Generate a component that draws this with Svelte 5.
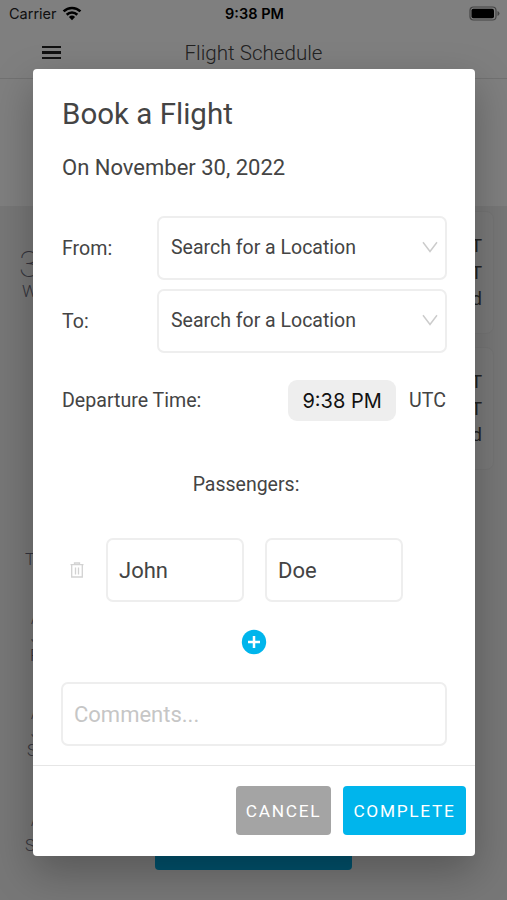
<script>
  let passengers = $state([{ first: "John", last: "Doe" }]);
  let comments = $state("");

  const locations = ["From:", "To:"];

  // Flight cards and roster lines on the schedule page
  const cards = [
    ["T", "T", "d"],
    ["T", "T", "d"],
  ];
  const roster = [
    { id: "head", lines: ["T"] },
    { id: "first", lines: ["A", "J", "P"] },
    { id: "second", lines: ["A", "J", "S"] },
    { id: "third", lines: ["A", "S"] },
  ];

  function addPassenger() {
    passengers.push({ first: "", last: "" });
  }

  function removePassenger(i) {
    passengers.splice(i, 1);
  }
</script>

<div class="screen">
  <div class="status-bar">
    <div class="carrier">
      <span>Carrier</span>
      <svg width="20" height="15" viewBox="0 0 20 15">
        <path d="M1.6 5.4a12 12 0 0 1 16.8 0" />
        <path d="M4.7 8.7a7.6 7.6 0 0 1 10.6 0" />
        <path class="dot" d="M6.9 11a4.5 4.5 0 0 1 6.2 0L10 14.2z" />
      </svg>
    </div>
    <span class="clock">9:38 PM</span>
    <svg class="battery" width="31" height="15" viewBox="0 0 31 15">
      <rect class="shell" x="1" y="1" width="26" height="13" rx="3.5" />
      <rect x="2.500" y="2.700" width="22.500" height="9.600" rx="1.8" />
      <path class="cap" d="M28.5 5v5q2-.8 2-2.500t-2-2.500z" />
    </svg>
  </div>

  <header>
    <div class="burger"><i></i><i></i><i></i></div>
    <h1>Flight Schedule</h1>
  </header>

  <main>
    <div class="day">
      <span class="num">3</span>
      <span class="name">W</span>
      <div class="roster">
        {#each roster as group (group.id)}
          <div class="group {group.id}">
            {#each group.lines as line}
              <span>{line}</span>
            {/each}
          </div>
        {/each}
      </div>
    </div>
    <div class="cards">
      {#each cards as card}
        <div class="card">
          {#each card as line}
            <span>{line}</span>
          {/each}
        </div>
      {/each}
    </div>
  </main>
  <div class="page-btn"></div>

  <div class="overlay">
    <div class="modal" role="dialog" aria-label="Book a Flight">
      <div class="body">
        <h2>Book a Flight</h2>
        <p class="date">On November 30, 2022</p>

        <div class="locations">
          {#each locations as label}
            <div class="row">
              <span class="label">{label}</span>
              <button class="box select">
                <span>Search for a Location</span>
                <svg width="16" height="12" viewBox="0 0 16 12">
                  <path d="M1 1.200 8 10.400 15 1.200" />
                </svg>
              </button>
            </div>
          {/each}
        </div>

        <div class="departure">
          <span class="label">Departure Time:</span>
          <button class="time">9:38 PM</button>
          <span class="utc">UTC</span>
        </div>

        <h3>Passengers:</h3>
        {#each passengers as passenger, i}
          <div class="passenger">
            <button class="trash" aria-label="Remove" onclick={() => removePassenger(i)}>
              <svg width="14" height="16" viewBox="0 0 14 16">
                <path d="M.5 2.700h13M4.500 2.500V1h5v1.500M1.700 3v12h10.600V3M5.500 5.500v7M8.500 5.500v7" />
              </svg>
            </button>
            <input class="box" aria-label="First name" bind:value={passenger.first} />
            <input class="box" aria-label="Last name" bind:value={passenger.last} />
          </div>
        {/each}

        <button class="add" aria-label="Add passenger" onclick={addPassenger}>
          <svg width="26" height="26" viewBox="0 0 26 26">
            <circle cx="13" cy="13" r="12.200" />
            <path d="M13 7v12M7 13h12" />
          </svg>
        </button>

        <input class="box comments" placeholder="Comments..." bind:value={comments} />
      </div>
      <footer>
        <button class="btn cancel">CANCEL</button>
        <button class="btn complete">COMPLETE</button>
      </footer>
    </div>
  </div>
</div>

<style>
  :global(body) {
    margin: 0;
  }

  .screen {
    position: relative;
    width: 507px;
    height: 900px;
    overflow: hidden;
    display: flex;
    flex-direction: column;
    background: #eee;
    color: #444;
    font-family: Roboto, "Liberation Sans", sans-serif;
  }

  .screen * {
    box-sizing: border-box;
  }

  button {
    padding: 0;
    border: 0;
    background: none;
    color: inherit;
    font: inherit;
  }

  /* Schedule page */
  .status-bar {
    display: grid;
    grid-template-columns: 1fr auto 1fr;
    align-items: center;
    height: 27px;
    padding: 0 7px 0 9px;
    background: #fff;
    color: #000;
    font: 14.5px Inter, sans-serif;
  }

  .carrier {
    display: flex;
    align-items: center;
    gap: 5px;
  }

  .carrier span {
    color: #222;
  }

  .carrier path {
    fill: none;
    stroke: #000;
    stroke-width: 2.6;
  }

  .carrier .dot {
    fill: #000;
    stroke: none;
  }

  .clock {
    font-weight: 600;
  }

  .battery {
    justify-self: end;
  }

  .battery .shell {
    fill: none;
    stroke: #888;
    stroke-width: 1.2;
  }

  .battery .cap {
    fill: #888;
  }

  header {
    display: grid;
    grid-template-columns: 102px 1fr 102px;
    align-items: center;
    height: 52px;
    border-bottom: 1px solid #e2e2e2;
    background: #fff;
  }

  .burger {
    display: flex;
    flex-direction: column;
    gap: 3px;
    width: 19px;
    margin-left: 42px;
  }

  .burger i {
    height: 2.5px;
    background: #222;
  }

  h1 {
    margin: 0;
    color: #444;
    font-size: 20.6px;
    font-weight: 300;
    text-align: center;
  }

  main {
    display: flex;
    justify-content: space-between;
    height: 821px;
    padding: 132px 13px 0 19px;
    background: linear-gradient(#fff 127px, #eee 127px);
  }

  .day {
    display: flex;
    flex-direction: column;
    padding-top: 36px;
    color: #667;
    font-weight: 300;
    opacity: 0.99;
  }

  .num {
    font-size: 36px;
    font-weight: 100;
    line-height: 36px;
  }

  .name {
    padding-left: 3px;
    font-size: 17px;
    line-height: 16px;
  }

  .roster {
    display: flex;
    flex-direction: column;
    padding: 250px 0 0 6px;
    font-size: 17px;
    line-height: 20px;
  }

  .group {
    display: flex;
    flex-direction: column;
  }

  .first,
  .second {
    padding-top: 41px;
    line-height: 18px;
  }

  .first span:last-child {
    padding-left: 5px;
  }

  .second span:last-child {
    padding-left: 2px;
  }

  .third {
    gap: 6px;
    padding-top: 53px;
    line-height: 18px;
  }

  .group span:not(:last-child) {
    padding-left: 6px;
    font-size: 14px;
  }

  .cards {
    display: flex;
    flex-direction: column;
    gap: 13px;
  }

  .card {
    display: flex;
    flex-direction: column;
    width: 60px;
    height: 123px;
    padding: 21px 11px;
    border: 1px solid #e8e8e8;
    border-radius: 8px;
    background: #f3f3f3;
    color: #444;
    font-size: 19px;
    line-height: 26.5px;
    text-align: right;
  }

  .page-btn {
    position: absolute;
    left: 155px;
    top: 820px;
    width: 197px;
    height: 50px;
    border-radius: 4px;
    background: #00a5da;
  }

  /* Booking dialog */
  .overlay {
    position: absolute;
    inset: 0;
    padding: 69px 32px 0 33px;
    background: rgba(0, 0, 0, 0.5);
  }

  .modal {
    height: 787px;
    border-radius: 4px;
    background: #fff;
    box-shadow: 0 16px 42px rgba(0, 0, 0, 0.27);
  }

  .body {
    display: flex;
    flex-direction: column;
    height: 697px;
    padding: 28px 28px 0;
    border-bottom: 1px solid #e6e6e6;
  }

  h2 {
    margin: 0 0 0 1px;
    font-size: 29.5px;
    font-weight: 400;
    line-height: 34px;
  }

  .date {
    margin: 24px 0 0 1px;
    font-size: 22px;
    line-height: 26px;
  }

  .locations {
    display: flex;
    flex-direction: column;
    gap: 9px;
    margin-top: 35px;
  }

  .row {
    display: grid;
    grid-template-columns: 96px 1fr;
    align-items: center;
  }

  .label {
    padding-left: 1px;
    font-size: 19.6px;
  }

  .box {
    width: 100%;
    min-width: 0;
    height: 64px;
    padding: 0 11px;
    border: 2px solid #eee;
    border-radius: 7px;
    outline: none;
    background: #fff;
    color: #444;
    font: 22px Roboto, "Liberation Sans", sans-serif;
  }

  .select {
    display: flex;
    align-items: center;
    justify-content: space-between;
    padding: 0 7px 2px 12px;
    font-size: 19.5px;
  }

  .select path {
    fill: none;
    stroke: #ccc;
    stroke-width: 1.5;
  }

  .departure {
    display: flex;
    align-items: center;
    margin-top: 27px;
    font-size: 19.6px;
  }

  .time {
    width: 108px;
    height: 41px;
    margin-left: auto;
    border-radius: 9px;
    background: #eee;
    color: #111;
    font: 20px Inter, sans-serif;
  }

  .utc {
    margin: 0 1px 0 13px;
  }

  h3 {
    margin: 52px 0 0;
    padding-right: 16px;
    font-size: 19.5px;
    font-weight: 400;
    line-height: 24px;
    text-align: center;
  }

  .passenger {
    display: grid;
    grid-template-columns: 24px 138px 138px;
    column-gap: 21px;
    align-items: center;
    margin-top: 41px;
  }

  .trash {
    display: flex;
    padding-left: 9px;
  }

  .trash svg {
    flex: none;
  }

  .trash path {
    fill: none;
    stroke: #d2d2d2;
    stroke-width: 1.3;
  }

  .add {
    display: flex;
    align-self: center;
    margin-top: 27px;
  }

  .add circle {
    fill: #00b5ec;
  }

  .add path {
    stroke: #fff;
    stroke-width: 2.5;
  }

  .comments {
    margin-top: 27px;
  }

  .comments::placeholder {
    color: #c6c6c6;
  }

  footer {
    display: flex;
    justify-content: flex-end;
    gap: 12px;
    padding: 20px 9px 0;
  }

  .btn {
    width: 95px;
    height: 49px;
    border-radius: 4px;
    color: #fff;
    font-size: 17.3px;
    letter-spacing: 1.7px;
  }

  .cancel {
    background: #a4a4a4;
  }

  .complete {
    width: 123px;
    background: #00b5ec;
  }
</style>
